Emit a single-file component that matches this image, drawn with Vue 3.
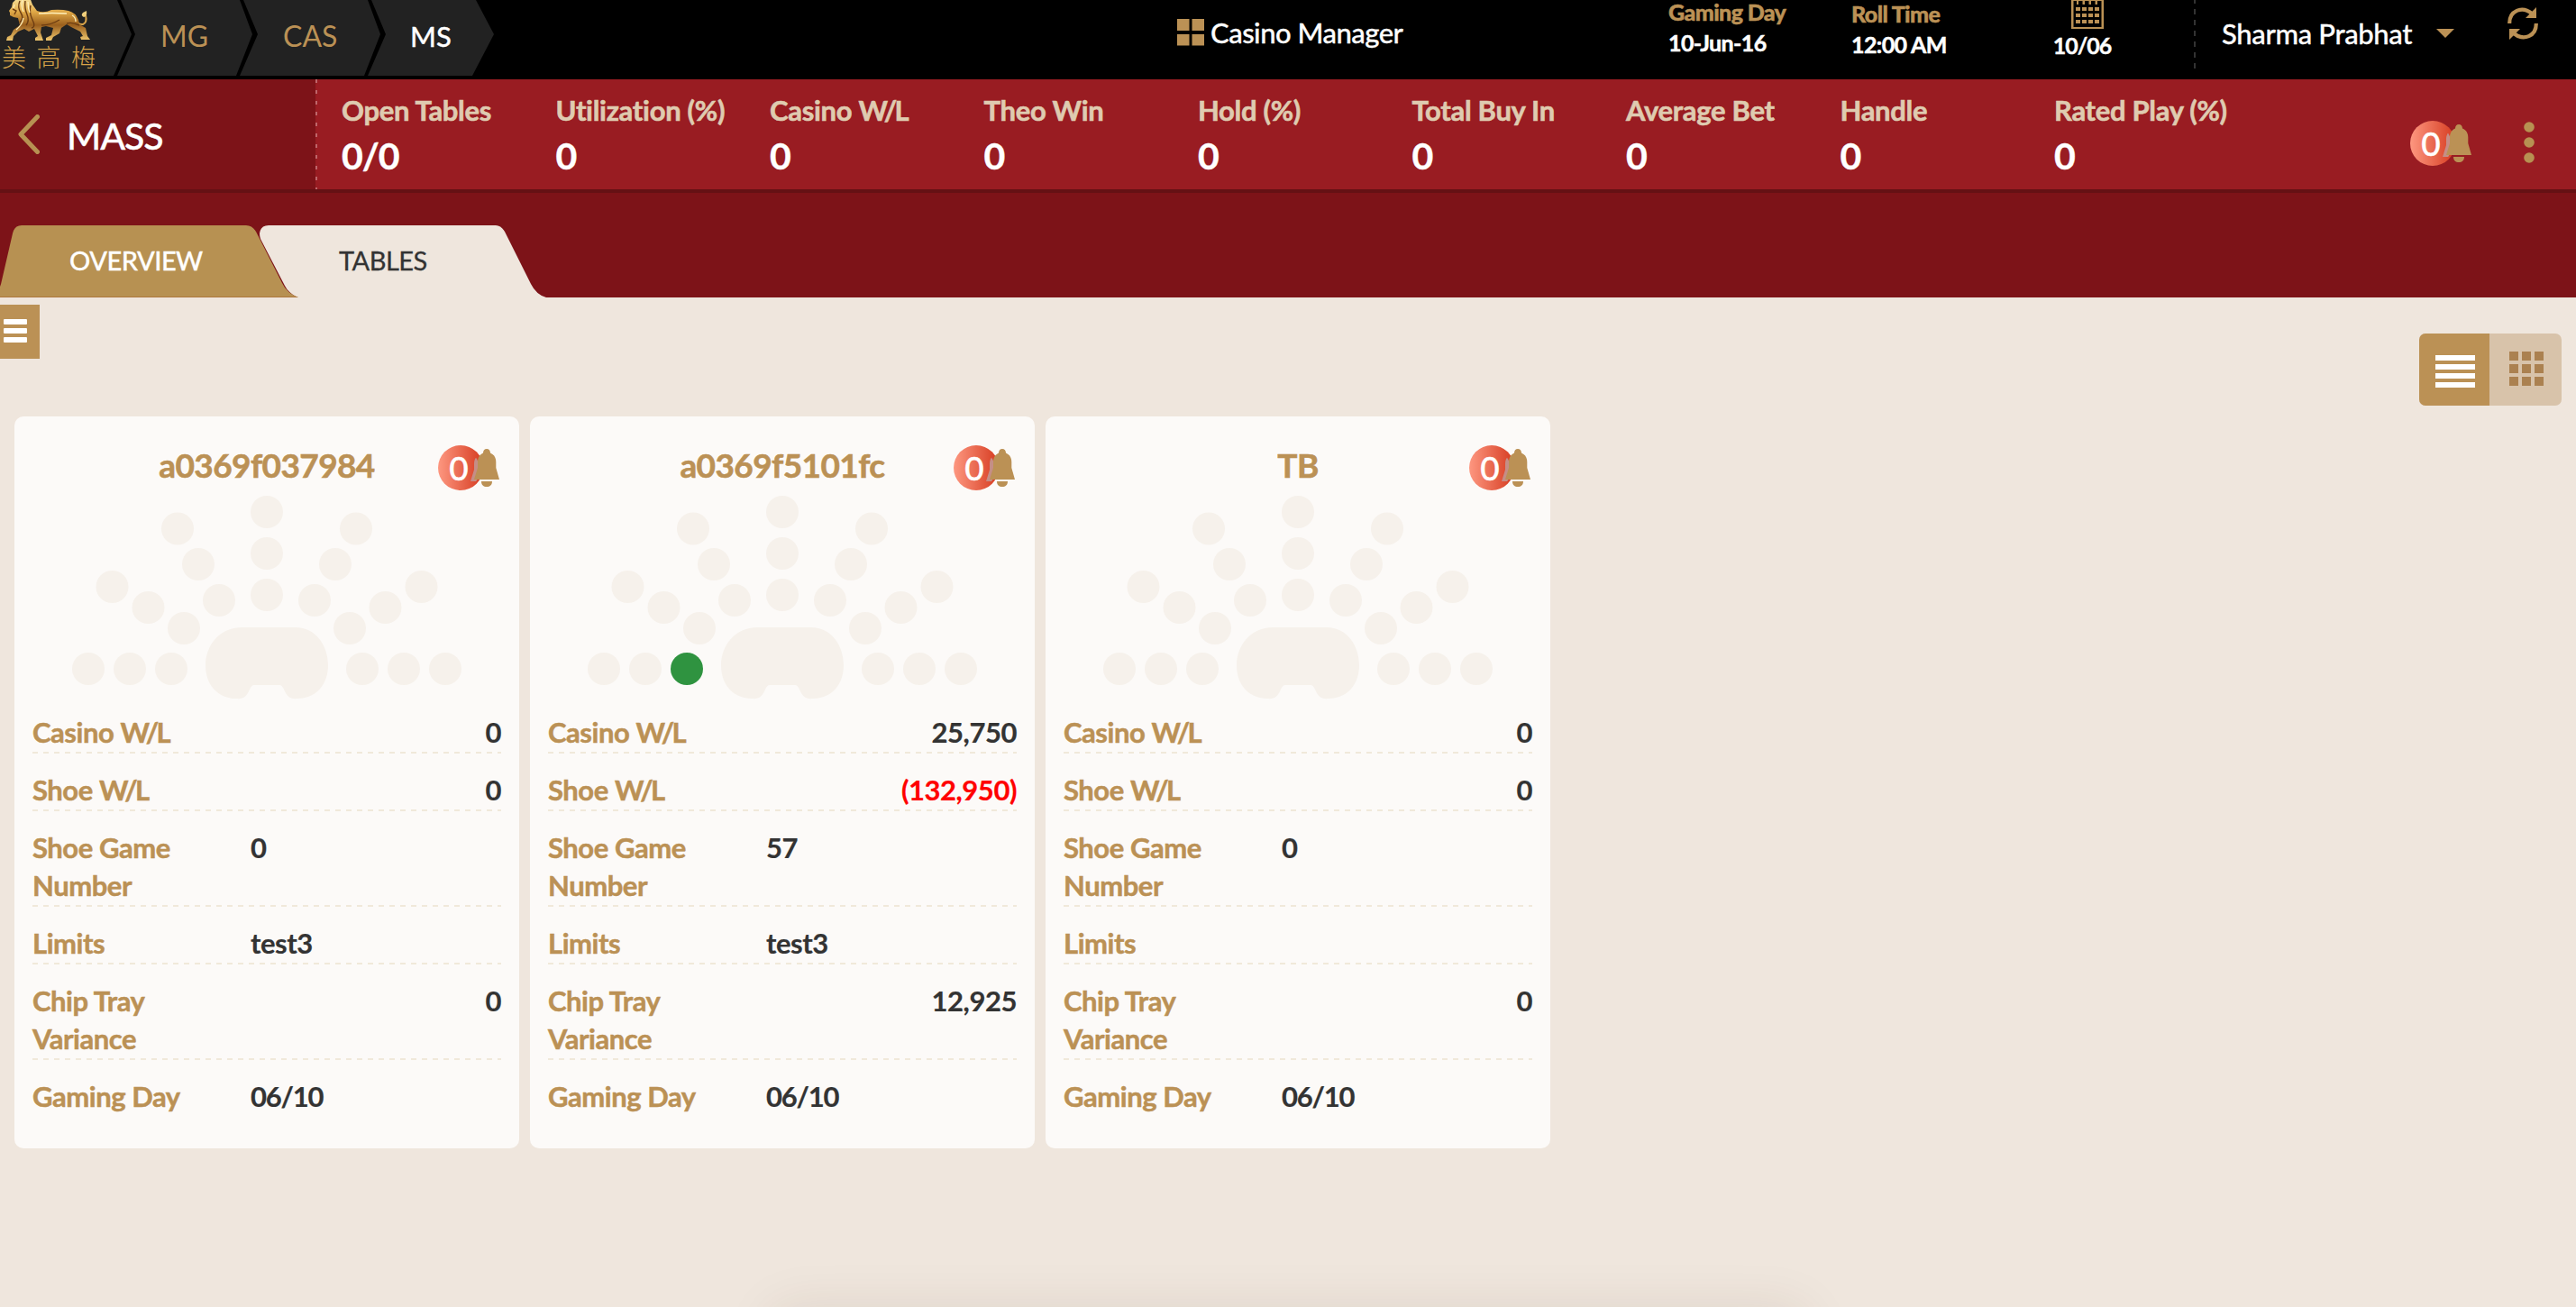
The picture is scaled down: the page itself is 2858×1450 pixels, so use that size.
<script setup>
const stats = [
  { label: 'Open Tables', value: '0/0' },
  { label: 'Utilization (%)', value: '0' },
  { label: 'Casino', ratio: 'W/L', value: '0' },
  { label: 'Theo Win', value: '0' },
  { label: 'Hold (%)', value: '0' },
  { label: 'Total Buy In', value: '0' },
  { label: 'Average Bet', value: '0' },
  { label: 'Handle', value: '0' },
  { label: 'Rated Play (%)', value: '0' },
]

const rows = (casino, shoe, game, limits, variance) => [
  { label: 'Casino', ratio: 'W/L', value: casino, right: true },
  { label: 'Shoe', ratio: 'W/L', value: shoe, right: true },
  { label: 'Shoe Game Number', value: game },
  { label: 'Limits', value: limits },
  { label: 'Chip Tray Variance', value: variance, right: true },
  { label: 'Gaming Day', value: '06/10', date: true },
]

const tables = [
  { name: 'a0369f037984', active: -1, rows: rows('0', '0', '0', 'test3', '0') },
  { name: 'a0369f5101fc', active: 2, rows: rows('25,750', '(132,950)', '57', 'test3', '12,925') },
  { name: 'TB', active: -1, rows: rows('0', '0', '0', '', '0') },
]

// Seat centres inside the 560x228 table drawing
const seats = [
  [82, 194], [128, 194], [174, 194],
  [108.5, 103], [148.5, 126], [188, 149],
  [181, 38.5], [204, 78], [227, 118],
  [280, 20], [280, 66], [280, 112],
  [379, 38.5], [356, 78], [333, 118],
  [451.5, 103], [411.5, 126], [372, 149],
  [386, 194], [432, 194], [478, 194],
]
const grid = [0, 1, 2, 3, 4, 5, 6, 7, 8]
</script>

<template>
  <div class="page">
    <header class="top">
      <nav class="crumbs">
        <div class="crumb logo">
          <svg width="106" height="47" viewBox="0 0 106 47">
            <defs>
              <linearGradient id="gold" x1="0" y1="0" x2="0" y2="1">
                <stop offset="0" stop-color="#fbe9a6" />
                <stop offset=".35" stop-color="#e0a846" />
                <stop offset=".65" stop-color="#9a5f1d" />
                <stop offset="1" stop-color="#efc76e" />
              </linearGradient>
            </defs>
            <path fill="none" stroke="#d9a44a" stroke-width="2" d="M82 18Q86 28 92 27Q97 25 95 17" />
            <path fill="#f0cf7c" d="M96 12Q97 18 93 19Q89 17 92 14Z" />
            <path fill="url(#gold)" d="M21 -4L33 -3L36 5L41 12Q49 15 57 11Q68 10 76 12Q84 14 87 22L88 27L95 31L97 40L100 44L90 44L89 41L92 40L89 35L79 30L74 27L68 31L66 37L59 41L57 45L51 45L51 42L57 39L59 31L51 29L46 30L45 36L48 45L39 45L39 42L42 40L38 32L32 35L27 32L20 35L15 40L14 45L7 45L8 41L12 39L15 33L22 28L20 20L15 19L11 17L11 14L10 12L13 8L14 3Z" />
            <path fill="none" stroke="#6d3d12" stroke-width="1.4" d="M22 1Q19 8 23 14T22 25M28 1Q27 9 30 16T29 28M34 6Q32 14 36 22T35 31M14 10L18 12L16 16M46 28Q56 28 66 22M74 26Q80 24 88 28" />
            <path fill="none" stroke="#fff0bb" stroke-width="1.3" d="M25 0Q23 7 26 13M31 2Q31 9 33 14M43 15Q57 14 74 15M80 17Q84 19 84 24M26 20Q25 27 18 33M16 5L15 9" />
          </svg>
          <div class="cn"><span>美</span><span>高</span><span>梅</span></div>
        </div>
        <div class="crumb mg"><span>MG</span></div>
        <div class="crumb cas"><span>CAS</span></div>
        <div class="crumb ms"><span>MS</span></div>
      </nav>
      <div class="app">
        <svg width="30" height="30" viewBox="0 0 30 30" fill="#bb9155"><path d="M0 0h13.5v13H0zM16.500 0H30v13H16.500zM0 17h13.500v12.500H0zM16.500 17H30v12.500H16.500z" /></svg>
        <span>Casino Manager</span>
      </div>
      <div class="info day"><b>Gaming Day</b><span>10-Jun-16</span></div>
      <div class="info roll"><b>Roll Time</b><span>12:00 AM</span></div>
      <div class="cal">
        <svg width="36" height="32" viewBox="0 0 36 32" fill="#bb9155">
          <path fill-rule="evenodd" d="M0 0H36V32H0zM2.500 1V30H33.500V1H29v4h-2.500V1H22v4h-2.500V1H15v4h-2.500V1H8v4H6V1z" />
          <path d="M5 8h5v4H5zM12 8h5v4h-5zM19 8h5v4h-5zM26 8h5v4h-5zM5 15h5v4H5zM12 15h5v4h-5zM19 15h5v4h-5zM26 15h5v4h-5zM5 22h5v4H5zM12 22h5v4h-5zM19 22h5v4h-5zM26 22h5v4h-5z" />
        </svg>
        <span>10/06</span>
      </div>
      <i class="divider"></i>
      <div class="user">
        <span>Sharma Prabhat</span>
        <svg width="20" height="10" viewBox="0 0 20 10"><path fill="#bb9155" d="M0 0H20L10 10z" /></svg>
      </div>
      <svg class="refresh" width="34" height="36" viewBox="0 0 34 36">
        <path fill="none" stroke="#bb9155" stroke-width="4.200" d="M2.200 18C2 4 16 -2 27 7M31.800 18C32 32 18 38 7 29" />
        <path fill="#bb9155" d="M32 0V12H20zM2 36V24H14z" />
      </svg>
    </header>

    <section class="summary">
      <div class="title">
        <svg width="24" height="44" viewBox="0 0 24 44"><path fill="none" stroke="#b79152" stroke-width="5" stroke-linecap="round" stroke-linejoin="round" d="M21.500 2.500L3 22L21.500 41.500" /></svg>
        <h1>MASS</h1>
      </div>
      <div class="stats">
        <div v-for="s in stats" :key="s.label" class="stat">
          <span class="label">{{ s.label }}<template v-if="s.ratio">&nbsp;<span class="ratio">{{ s.ratio }}</span></template></span>
          <span class="value">{{ s.value }}</span>
        </div>
      </div>
      <svg class="badge" width="70" height="50" viewBox="0 0 70 50">
        <defs>
          <linearGradient id="alert"><stop offset="0" stop-color="#fd9780" /><stop offset="1" stop-color="#d63b20" /></linearGradient>
          <clipPath id="disc"><circle cx="25" cy="25" r="25" /></clipPath>
          <path id="bell" d="M54 4c2.500 0 4 1.800 4 4.500c4.500 2 6.300 5.500 6.300 10V25L68 38H40L44 25V18.500c0-4.500 1.700-8 6-10C50 5.800 51.500 4 54 4zM48 40H60C60 44 57.500 46 54 46S48 44 48 40z" />
        </defs>
        <circle cx="25" cy="25" r="25" fill="url(#alert)" />
        <use href="#bell" x="-4" y="2" fill="#c58e86" clip-path="url(#disc)" />
        <use href="#bell" fill="#bb9155" />
        <text x="23" y="39" text-anchor="middle">0</text>
      </svg>
      <svg class="more" width="12" height="46" viewBox="0 0 12 46" fill="#b79152"><circle cx="6" cy="6" r="5.800" /><circle cx="6" cy="23" r="5.800" /><circle cx="6" cy="40" r="5.800" /></svg>
    </section>

    <section class="tabs">
      <svg width="620" height="80" viewBox="0 0 620 80">
        <path fill="#efe6dd" d="M288 9Q289 0 298 0H550Q556 0 560 7L589 65Q595 77 606 80H330Q320 75 316 67L289 15Q288 12 288 9z" />
        <path fill="#b79152" d="M0 68Q1 66 2 61L14 9Q16 0 24 0H273Q280 0 284 7L313 64Q318 75 331 80H0z" />
        <path fill="#ad773d" d="M0 79H328L331 80H0z" />
      </svg>
      <span class="tab overview">OVERVIEW</span>
      <span class="tab tables">TABLES</span>
    </section>

    <main>
      <div class="tools">
        <button class="menu"><i></i><i></i><i></i></button>
        <div class="views">
          <div class="list"><i></i><i></i><i></i><i></i></div>
          <div class="tiles"><i v-for="g in grid" :key="g"></i></div>
        </div>
      </div>
      <div class="cards">
        <article v-for="t in tables" :key="t.name" class="card">
          <div class="head">
            <h2>{{ t.name }}</h2>
            <svg class="badge" width="70" height="50" viewBox="0 0 70 50">
              <circle cx="25" cy="25" r="25" fill="url(#alert)" />
              <use href="#bell" x="-4" y="2" fill="#c58e86" clip-path="url(#disc)" />
              <use href="#bell" fill="#bb9155" />
              <text x="23" y="39" text-anchor="middle">0</text>
            </svg>
          </div>
          <svg class="layout" width="560" height="228" viewBox="0 0 560 228" fill="#f6f1eb">
            <circle v-for="(p, i) in seats" :key="i" :cx="p[0]" :cy="p[1]" r="18" :fill="i === t.active ? '#2f9340' : '#f6f1eb'" />
            <path d="M252 148H312C334 148 348 168 348 190C348 212 334 227 314 227C298 229 301 212 294 212H266C259 212 262 229 246 227C226 227 212 212 212 190C212 168 228 148 252 148z" />
          </svg>
          <div class="rows">
            <div v-for="(r, n) in t.rows" :key="n" class="row">
              <span class="key">{{ r.label }}<template v-if="r.ratio">&nbsp;<span class="ratio">{{ r.ratio }}</span></template></span>
              <span class="val" :class="{ right: r.right, date: r.date, neg: r.value.startsWith('(') }">{{ r.value }}</span>
            </div>
          </div>
        </article>
      </div>
      <i class="glow"></i>
    </main>
  </div>
</template>

<style>
body { margin: 0; background: #efe6dd; }
</style>

<style scoped>
.page {
  width: 2858px;
  height: 1450px;
  overflow: hidden;
  display: flex;
  flex-direction: column;
  background: #efe6dd;
  font-family: Lato, "Noto Sans CJK TC", sans-serif;
  white-space: nowrap;
}
svg { display: block; flex: none; }
i { display: block; }
h1, h2 { margin: 0; }

.top { height: 88px; background: #000; display: flex; align-items: flex-start; flex: none; }
.crumbs { display: flex; width: 1306px; height: 84px; flex: none; }
.crumb { height: 84px; background: #222; box-sizing: border-box; color: #bb9155; font-size: 32px; line-height: 80px; flex: none; }
.logo { width: 146px; clip-path: polygon(0 0, 130px 0, 146px 38px, 126px 84px, 0 84px); }
.cn { display: flex; gap: 11.5px; padding-left: 2px; font: 300 27px/32px "Noto Sans CJK TC", sans-serif; color: #d8a449; }
.mg { width: 150px; margin-left: -16px; padding-left: 48px; clip-path: polygon(4px 0, 136px 0, 150px 38px, 132px 84px, 0 84px, 20px 38px); }
.cas { width: 156px; margin-left: -14px; padding-left: 48px; clip-path: polygon(4px 0, 142px 0, 156px 38px, 138px 84px, 0 84px, 20px 38px); }
.ms { width: 140px; margin-left: -14px; padding-left: 47px; color: #fff; font-size: 31px; font-weight: 500; -webkit-text-stroke: 0.3px; clip-path: polygon(4px 0, 120px 0, 140px 38px, 116px 84px, 0 84px, 20px 38px); }
.app { display: flex; gap: 7px; width: 545px; padding-top: 21px; flex: none; color: #fff; font-size: 31px; line-height: 31px; font-weight: 500; letter-spacing: -0.5px; -webkit-text-stroke: 0.3px; }
.info { display: flex; flex-direction: column; gap: 4px; width: 203px; flex: none; font-size: 25px; line-height: 30px; font-weight: 700; letter-spacing: -0.6px; color: #fff; -webkit-text-stroke: 0.5px; }
.info b { color: #bb9155; }
.day { margin-top: -2px; }
.roll { margin-top: 0; width: 201px; }
.info b { line-height: 30px; }
.cal { display: flex; flex-direction: column; align-items: center; width: 110px; font-size: 25px; line-height: 36px; font-weight: 700; letter-spacing: -1px; color: #fff; flex: none; -webkit-text-stroke: 0.4px; }
.cal svg { margin-left: 12px; }
.divider { width: 2px; height: 76px; margin-left: 69px; flex: none; background: repeating-linear-gradient(#333 0 6px, transparent 6px 12px) 0 -2px; }
.user { display: flex; padding: 22px 0 0 29px; flex: none; width: 317px; color: #fff; font-size: 31px; line-height: 31px; font-weight: 500; letter-spacing: -0.35px; -webkit-text-stroke: 0.3px; }
.user span { width: 238px; }
.user svg { margin-top: 10px; }
.refresh { margin-top: 8px; }

.summary { display: flex; height: 122px; background: #991c22; border-bottom: 4px solid #651114; flex: none; }
.title { display: flex; align-items: center; gap: 30px; width: 350px; padding-left: 20px; box-sizing: border-box; background: #7d1318; color: #fff; flex: none; }
.title h1 { font-size: 41px; font-weight: 500; letter-spacing: -1.1px; padding-top: 2px; -webkit-text-stroke: 0.4px; }
.stats { display: grid; grid-template-columns: repeat(9, 237.500px); width: 2324px; padding-left: 29px; box-sizing: border-box; background: repeating-linear-gradient(#bf666a 0 4px, transparent 4px 6px, transparent 6px 12px) 0 0 / 2px 100% no-repeat; flex: none; }
.stat { display: flex; flex-direction: column; font-weight: 700; }
.label { font-size: 31px; line-height: 40px; margin-top: 14px; color: #dfcbb0; letter-spacing: -0.3px; -webkit-text-stroke: 0.6px; }
.value { font-size: 41px; line-height: 50px; margin-top: 6px; color: #fff; letter-spacing: -1.1px; -webkit-text-stroke: 0.4px; }
.ratio { letter-spacing: -2.700px; }
.badge text { font-family: Lato, sans-serif; font-weight: 500; font-size: 37px; fill: #fff; stroke: #fff; stroke-width: 0.4px; }
.summary .badge { margin-top: 46px; }
.more { margin: 47px 0 0 56px; }

.tabs { position: relative; height: 80px; padding-top: 36px; background: #7d1318; flex: none; }
.tab { position: absolute; top: 35px; line-height: 79px; font-size: 29px; }
.overview { left: 77px; color: #fff; font-weight: 500; letter-spacing: -0.5px; -webkit-text-stroke: 0.3px; }
.tables { left: 376px; color: #333; letter-spacing: -0.5px; -webkit-text-stroke: 0.3px; }

main { position: relative; flex: 1; overflow: hidden; }
.tools { display: flex; justify-content: space-between; height: 132px; box-sizing: border-box; padding: 8px 16px 0 0; }
.menu { width: 44px; height: 60px; border: 0; background: #bb9155; padding: 16px 0 0 4px; display: flex; flex-direction: column; gap: 4px; }
.menu i { width: 26px; height: 6px; border-radius: 1px; background: #fff; }
.views { display: flex; width: 158px; height: 80px; margin-top: 32px; border-radius: 7px; overflow: hidden; background: #d8c3aa; }
.list { width: 78px; background: #bb9155; padding: 24px 0 0 18px; box-sizing: border-box; display: flex; flex-direction: column; gap: 4px; }
.list i { width: 44px; height: 6px; background: #fff; }
.tiles { display: grid; grid-template-columns: repeat(3, 10px); grid-auto-rows: 10px; gap: 4px; padding: 20px 0 0 22px; }
.tiles i { background: #ab8150; }

.cards { display: flex; gap: 12px; padding-left: 16px; }
.card { width: 560px; height: 812px; background: #fcfaf8; border-radius: 10px; }
.head { position: relative; height: 86px; }
h2 { text-align: center; padding-top: 31px; font-size: 37px; line-height: 46px; font-weight: 700; letter-spacing: -0.6px; color: #bb9155; -webkit-text-stroke: 0.6px; }
.head .badge { position: absolute; left: 470px; top: 32px; }
.rows { margin: -4px 20px 0; }
.row { display: flex; padding: 19px 0 3px; font-size: 31px; line-height: 42px; font-weight: 700; letter-spacing: -0.45px; -webkit-text-stroke: 0.5px; background: repeating-linear-gradient(90deg, #f0e9da 0 6px, transparent 6px 12px) 0 100% / 100% 2px no-repeat; }
.row:last-child { background: none; }
.key { width: 242px; padding-right: 60px; box-sizing: border-box; white-space: normal; color: #bb9155; flex: none; }
.val { flex: 1; color: #333; -webkit-text-stroke: 0.2px; }
.right { text-align: right; }
.date { letter-spacing: -1.2px; }
.neg { color: #ff0000; }
.glow { position: absolute; left: 860px; top: 1125px; width: 1140px; height: 80px; box-shadow: 0 0 60px rgba(70, 50, 25, .11); }
</style>
